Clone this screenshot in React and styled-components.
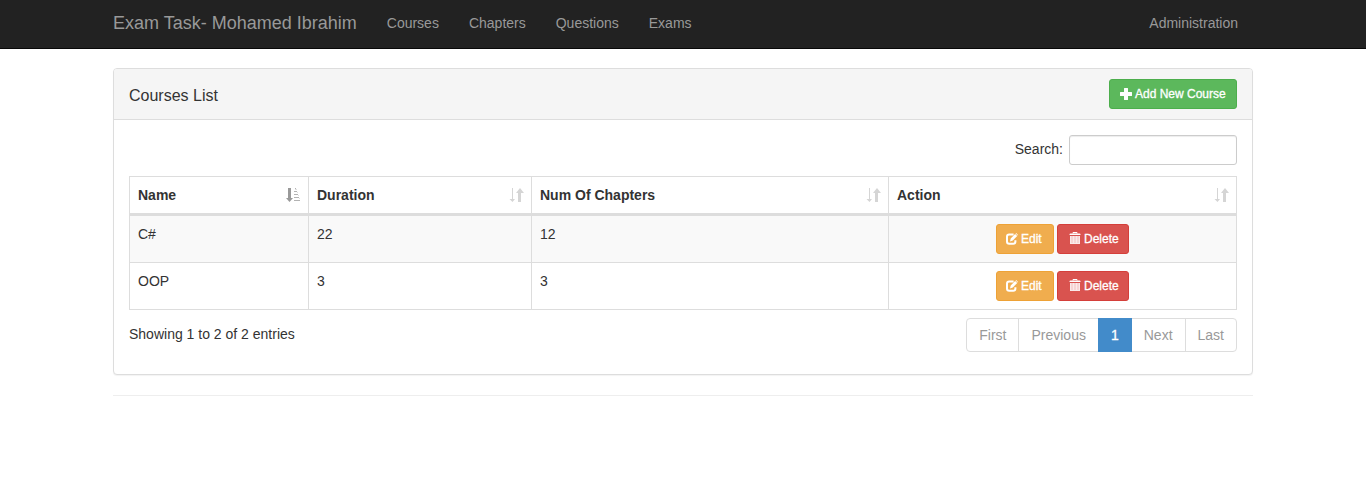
import React from 'react';
import styled, { createGlobalStyle, css } from 'styled-components';

const GlobalStyle = createGlobalStyle`
  *, *::before, *::after { box-sizing: border-box; }
  body {
    margin: 0;
    background: #fff;
    color: #333;
    font: 14px/20px "Liberation Sans", Arial, sans-serif;
  }
`;

const Container = styled.div`
  width: 1140px;
  margin: 0 auto;
`;

const Navbar = styled.nav`
  height: 49px;
  background: #222;
  border-bottom: 1px solid #080808;
`;

const NavInner = styled(Container)`
  display: flex;
  align-items: center;
  height: 46px;
`;

const Brand = styled.a`
  margin-right: 15px;
  font-size: 18px;
  color: #999;
`;

const NavLink = styled.a`
  padding: 0 15px;
  color: #999;
  ${(p) => p.$right && css`margin-left: auto;`}
`;

const Panel = styled.section`
  margin-top: 19px;
  height: 307px;
  background: #fff;
  border: 1px solid #ddd;
  border-radius: 4px;
  box-shadow: 0 1px 1px rgba(0, 0, 0, 0.05);
`;

const PanelHeading = styled.header`
  display: flex;
  align-items: center;
  justify-content: space-between;
  height: 51px;
  padding: 0 15px;
  background: #f5f5f5;
  border-bottom: 1px solid #ddd;
  border-radius: 3px 3px 0 0;
`;

const Title = styled.h3`
  margin: 4px 0 0;
  font-size: 16px;
  font-weight: 400;
`;

const PanelBody = styled.div`
  padding: 15px;
`;

const tones = {
  success: ['#5cb85c', '#4cae4c'],
  warning: ['#f0ad4e', '#eea236'],
  danger: ['#d9534f', '#d43f3a'],
};

const Button = styled.button`
  display: flex;
  align-items: center;
  gap: 3px;
  width: ${(p) => p.$width}px;
  height: 30px;
  padding: 0 0 0 ${(p) => p.$inset}px;
  color: #fff;
  font: 12px/18px "Liberation Sans", Arial, sans-serif;
  -webkit-text-stroke: 0.3px #fff;
  background: ${(p) => tones[p.$tone][0]};
  border: 1px solid ${(p) => tones[p.$tone][1]};
  border-radius: 3px;
  white-space: nowrap;
`;

const ButtonIcon = styled.svg`
  flex: none;
  width: 12px;
  height: 12px;
  margin-bottom: ${(p) => p.$lift || 0}px;
`;

const SearchRow = styled.label`
  display: flex;
  justify-content: flex-end;
  gap: 6px;
  line-height: 28px;
`;

const SearchInput = styled.input`
  width: 168px;
  height: 30px;
  padding: 5px 10px;
  border: 1px solid #ccc;
  border-radius: 3px;
  box-shadow: inset 0 1px 1px rgba(0, 0, 0, 0.075);
`;

const Table = styled.table`
  width: 1108px;
  margin-top: 11px;
  table-layout: fixed;
  border-collapse: separate;
  border-spacing: 0;
  border: solid #ddd;
  border-width: 1px 0 0 1px;
`;

const HeadCell = styled.th`
  width: ${(p) => p.$width}px;
  height: 39px;
  padding: 8px 7px 8px 8px;
  text-align: left;
  border-right: 1px solid #ddd;
  border-bottom: 3px solid #ddd;
`;

const HeadContent = styled.div`
  display: flex;
  justify-content: space-between;
  height: 20px;
`;

const SortIcon = styled.svg`
  width: 16px;
  height: 16px;
  margin-top: 2px;
`;

const Row = styled.tr`
  background: ${(p) => (p.$striped ? '#f9f9f9' : '#fff')};
`;

const Cell = styled.td`
  height: 47px;
  padding: 8px;
  vertical-align: top;
  border-right: 1px solid #ddd;
  border-bottom: 1px solid #ddd;
`;

const Actions = styled.div`
  display: flex;
  justify-content: center;
  gap: 3px;
`;

const TableFooter = styled.footer`
  display: flex;
  justify-content: space-between;
  padding-top: 8px;
`;

const Info = styled.div`
  padding-top: 6px;
`;

const Pagination = styled.div`
  display: flex;
`;

const Page = styled.a`
  height: 34px;
  padding: 6px 12px;
  margin-left: -1px;
  color: #999;
  border: 1px solid #ddd;
  &:first-child { border-radius: 4px 0 0 4px; }
  &:last-child { border-radius: 0 4px 4px 0; }
  ${(p) => p.$active && css`
    z-index: 1;
    color: #fff;
    background: #428bca;
    border-color: #428bca;
    -webkit-text-stroke: 0.3px #fff;
  `}
`;

const Divider = styled.hr`
  margin: 20px 0 0;
  border: 0;
  border-top: 1px solid #eee;
`;

const PlusIcon = () => (
  <ButtonIcon viewBox="0 0 12 12" fill="#fff">
    <path d="M4.500 0h3q.5 0 .5.500V4h3.500q.5 0 .5.500v3q0 .5-.5.500H8v3.500q0 .5-.5.500h-3q-.5 0-.5-.5V8H.5Q0 8 0 7.500v-3Q0 4 .5 4H4V.5Q4 0 4.500 0z" />
  </ButtonIcon>
);

const EditIcon = () => (
  <ButtonIcon viewBox="0 0 12 12" fill="none">
    <path d="M7.600 1.500H3.200Q1 1.500 1 3.700V8.500Q1 10.700 3.200 10.700H7.200Q9.400 10.700 9.400 8.500V7.200" stroke="#fff" strokeWidth="2" />
    <path d="M4 8.500L4.700 5.400L9.100 1L11.200 3.100L6.800 7.600Z M9.600 .5L10.200 0L12 1.900L11.600 2.500Z" fill="#fff" />
  </ButtonIcon>
);

const TrashIcon = () => (
  <ButtonIcon viewBox="0 0 12 12" $lift={2}>
    <path d="M4 1.500V.5H8V1.500" fill="none" stroke="#fff" />
    <path d="M.5 2.500Q.5 1.500 1.500 1.500H10.500Q11.500 1.500 11.500 2.500V3H.5Z" fill="#fff" />
    <path d="M1 4H11V12H1Z" fill="#fff" opacity=".75" />
    <path d="M1 11.500H11M1.500 4V12M4.500 4V12M7.500 4V12M10.500 4V12" stroke="#fff" opacity=".5" />
  </ButtonIcon>
);

const SortBoth = () => (
  <SortIcon viewBox="0 0 16 16" fill="#d5d5d5">
    <path d="M4 1h1v11h2L4.500 15L1.500 12H4z" />
    <path d="M10 15V6H8L12 1L16 6H13V15z" />
  </SortIcon>
);

const SortAscending = () => (
  <SortIcon viewBox="0 0 16 16" fill="#999">
    <path d="M3 1h3v10h2L4.500 15L1 11h2z" />
    <path d="M10 1h1v1h-1zM9 4h3v1H9zM9 7h4v1H9zM9 10h5v1H9zM9 13h6v1H9z" opacity=".75" />
    <path d="M10 2h2v1h-2zM12 5h1v1h-1zM13 8h1v1h-1zM14 11h1v1h-1z" opacity=".3" />
  </SortIcon>
);

const columns = [
  { label: 'Name', width: 179, sorted: true },
  { label: 'Duration', width: 223 },
  { label: 'Num Of Chapters', width: 357 },
  { label: 'Action', width: 348 },
];

const courses = [
  { name: 'C#', duration: 22, chapters: 12 },
  { name: 'OOP', duration: 3, chapters: 3 },
];

export default function App() {
  return (
    <>
      <GlobalStyle />
      <Navbar>
        <NavInner>
          <Brand>Exam Task- Mohamed Ibrahim</Brand>
          <NavLink>Courses</NavLink>
          <NavLink>Chapters</NavLink>
          <NavLink>Questions</NavLink>
          <NavLink>Exams</NavLink>
          <NavLink $right>Administration</NavLink>
        </NavInner>
      </Navbar>
      <Container>
        <Panel>
          <PanelHeading>
            <Title>Courses List</Title>
            <Button $tone="success" $width={128} $inset={10}><PlusIcon />Add New Course</Button>
          </PanelHeading>
          <PanelBody>
            <SearchRow>Search: <SearchInput type="search" /></SearchRow>
            <Table>
              <thead>
                <tr>
                  {columns.map((c) => (
                    <HeadCell key={c.label} $width={c.width}>
                      <HeadContent>
                        {c.label}
                        {c.sorted ? <SortAscending /> : <SortBoth />}
                      </HeadContent>
                    </HeadCell>
                  ))}
                </tr>
              </thead>
              <tbody>
                {courses.map((c, i) => (
                  <Row key={c.name} $striped={i % 2 === 0}>
                    <Cell>{c.name}</Cell>
                    <Cell>{c.duration}</Cell>
                    <Cell>{c.chapters}</Cell>
                    <Cell>
                      <Actions>
                        <Button $tone="warning" $width={58} $inset={9}><EditIcon />Edit</Button>
                        <Button $tone="danger" $width={72} $inset={11}><TrashIcon />Delete</Button>
                      </Actions>
                    </Cell>
                  </Row>
                ))}
              </tbody>
            </Table>
            <TableFooter>
              <Info>Showing 1 to 2 of 2 entries</Info>
              <Pagination>
                <Page>First</Page>
                <Page>Previous</Page>
                <Page $active>1</Page>
                <Page>Next</Page>
                <Page>Last</Page>
              </Pagination>
            </TableFooter>
          </PanelBody>
        </Panel>
        <Divider />
      </Container>
    </>
  );
}
